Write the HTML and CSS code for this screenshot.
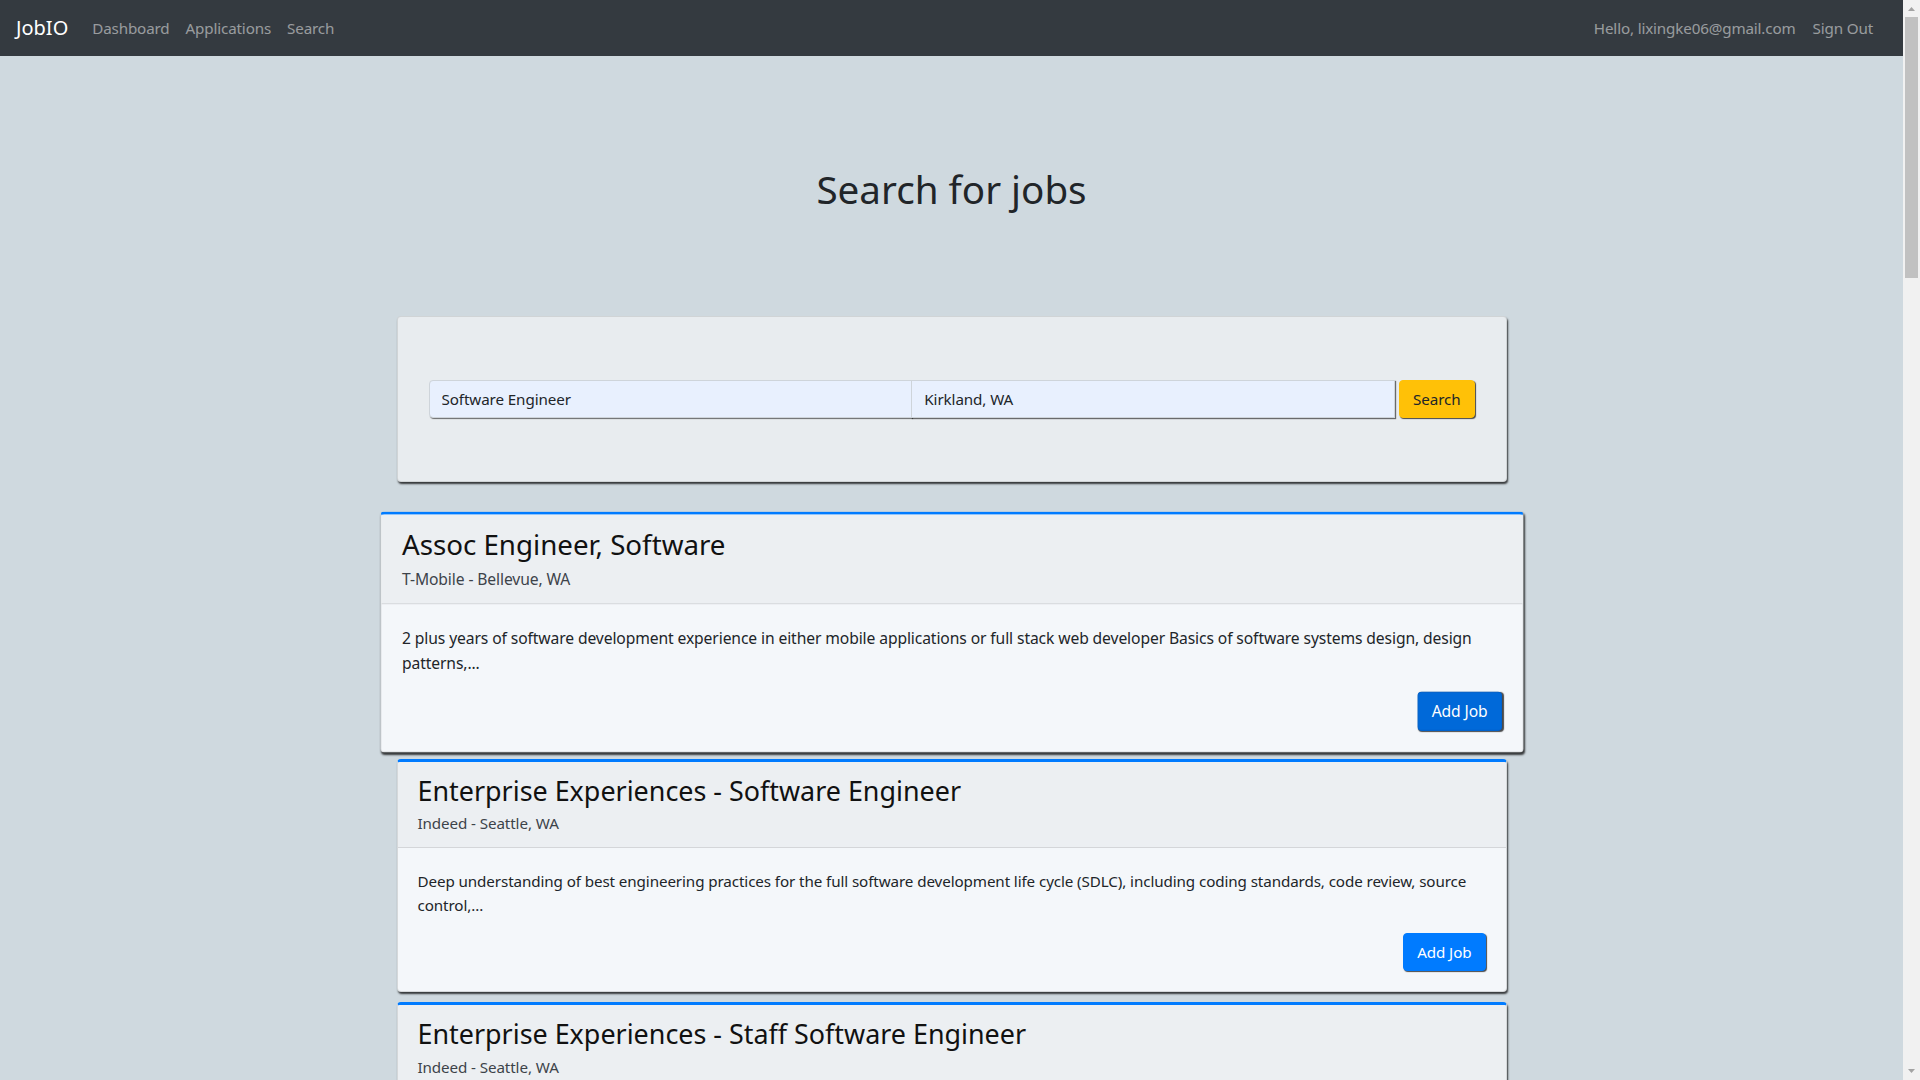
FILE: index.html
```html
<!DOCTYPE html>
<html lang="en">
<head>
<meta charset="utf-8">
<title>JobIO - Search</title>
<link rel="stylesheet" href="styles.css">
</head>
<body>
<div class="page">
  <nav class="navbar">
    <a class="brand" href="#">JobIO</a>
    <ul class="nav">
      <li><a class="nav-link" href="#">Dashboard</a></li>
      <li><a class="nav-link" href="#">Applications</a></li>
      <li><a class="nav-link" href="#">Search</a></li>
    </ul>
    <div class="nav-right">
      <span class="nav-text">Hello, lixingke06@gmail.com</span>
      <a class="nav-link" href="#">Sign Out</a>
    </div>
  </nav>

  <main class="content">
    <h1 class="page-title">Search for jobs</h1>

    <section class="search-card">
      <form class="input-group">
        <input class="field field-first" type="text" value="Software Engineer">
        <input class="field field-last" type="text" value="Kirkland, WA">
        <button class="btn btn-warning" type="button">Search</button>
      </form>
    </section>

    <div class="job-list">
      <article class="job-card is-hovered">
        <header class="job-header">
          <h3 class="job-title">Assoc Engineer, Software</h3>
          <div class="job-sub">T-Mobile - Bellevue, WA</div>
        </header>
        <div class="job-body">
          <p class="job-desc">2 plus years of software development experience in either mobile applications or full stack web developer Basics of software systems design, design patterns,...</p>
          <div class="job-actions"><button class="btn btn-primary btn-hover" type="button">Add Job</button></div>
        </div>
      </article>

      <article class="job-card">
        <header class="job-header">
          <h3 class="job-title">Enterprise Experiences - Software Engineer</h3>
          <div class="job-sub">Indeed - Seattle, WA</div>
        </header>
        <div class="job-body">
          <p class="job-desc">Deep understanding of best engineering practices for the full software development life cycle (SDLC), including coding standards, code review, source control,...</p>
          <div class="job-actions"><button class="btn btn-primary" type="button">Add Job</button></div>
        </div>
      </article>

      <article class="job-card">
        <header class="job-header">
          <h3 class="job-title">Enterprise Experiences - Staff Software Engineer</h3>
          <div class="job-sub">Indeed - Seattle, WA</div>
        </header>
        <div class="job-body">
          <div class="job-actions"><button class="btn btn-primary" type="button">Add Job</button></div>
        </div>
      </article>
    </div>
  </main>
</div>

<aside class="scrollbar" aria-hidden="true">
  <svg class="sb-arrow" width="17" height="17" viewBox="0 0 17 17"><polygon points="5,11 12,11 8.5,7" fill="#a3a3a3"/></svg>
  <div class="sb-thumb"></div>
  <div class="sb-track"></div>
  <svg class="sb-arrow" width="17" height="17" viewBox="0 0 17 17"><polygon points="5,6 12,6 8.5,10" fill="#a3a3a3"/></svg>
</aside>
</body>
</html>
```

FILE: styles.css
```css
* { box-sizing: border-box; }

html, body {
  margin: 0;
  height: 100%;
  overflow: hidden;
}

body {
  display: flex;
  background: #cfd9df;
  font-family: "Noto Sans", "Open Sans", sans-serif;
  font-size: 15.2px;
  letter-spacing: -0.1px;
  line-height: 24px;
  color: #212529;
}

.page {
  flex: 1;
  min-width: 0;
  height: 100vh;
  overflow: hidden;
}

/* Navbar */
.navbar {
  height: 56px;
  background: #343a40;
  display: flex;
  align-items: center;
  padding: 0 22px 0 16px;
}

.brand {
  color: #fff;
  font-size: 20px;
  letter-spacing: 0;
  text-decoration: none;
  margin-right: 16px;
  line-height: 30px;
}

.nav {
  display: flex;
  list-style: none;
  margin: 0;
  padding: 0;
}

.nav-link {
  display: block;
  padding: 8px;
  color: rgba(255, 255, 255, 0.5);
  text-decoration: none;
  letter-spacing: -0.15px;
}

.nav-right {
  margin-left: auto;
  display: flex;
  align-items: center;
  gap: 9px;
}

.nav-text {
  color: rgba(255, 255, 255, 0.5);
  letter-spacing: -0.15px;
}

/* Content */
.content {
  width: 1110px;
  margin: 0 auto;
}

.page-title {
  margin: 109px 0 103px;
  font-size: 38.6px;
  font-weight: 400;
  letter-spacing: 0;
  line-height: 48px;
  text-align: center;
  color: #212529;
}

.search-card {
  background: #e8ecef;
  border: 1px solid rgba(0, 0, 0, 0.1);
  border-radius: 4px;
  padding: 63px 31px;
  box-shadow: 1px 2px 2px rgba(0, 0, 0, 0.75);
}

.input-group {
  display: flex;
  margin: 0;
}

.field {
  flex: 1;
  min-width: 0;
  height: 38px;
  padding: 6px 12px;
  font-family: inherit;
  font-size: 15.2px;
  letter-spacing: -0.1px;
  color: #212529;
  background: #e8f0fe;
  border: 1px solid #ced4da;
  box-shadow: 1px 1px 1px rgba(0, 0, 0, 0.55);
  outline: none;
}

.field-first {
  border-radius: 4px 0 0 4px;
}

.field-last {
  border-radius: 0;
  margin-left: -1px;
}

.btn {
  height: 38px;
  padding: 6px 13px;
  font-family: inherit;
  font-size: 15.2px;
  letter-spacing: -0.1px;
  line-height: 24px;
  border: 1px solid transparent;
  border-radius: 4px;
  box-shadow: 1px 1px 1px rgba(0, 0, 0, 0.7);
  cursor: pointer;
}

.btn-warning {
  margin-left: 4px;
  background: #ffc107;
  border-color: #ffc107;
  color: #212529;
}

.btn-primary {
  background: #007bff;
  border-color: #007bff;
  color: #fff;
}

.btn-hover {
  background: #0069d9;
  border-color: #0062cc;
}

/* Job cards */
.job-list {
  margin-top: 33px;
  display: flex;
  flex-direction: column;
  gap: 10px;
}

.job-card {
  background: #f4f7fa;
  border: 1px solid rgba(0, 0, 0, 0.125);
  border-top: 3px solid #007bff;
  border-radius: 4px;
  box-shadow: 1px 2px 2px rgba(0, 0, 0, 0.75);
  overflow: hidden;
}

.job-card.is-hovered {
  transform: scale(1.03);
}

.job-header {
  background: #eceff2;
  border-bottom: 1px solid rgba(0, 0, 0, 0.1);
  padding: 12px 20px 12px;
}

.job-title {
  margin: 0 0 4px;
  font-size: 26.9px;
  font-weight: 400;
  letter-spacing: 0;
  line-height: 33.6px;
  color: #111;
}

.job-sub {
  color: #3d434a;
}

.job-body {
  padding: 21px 20px 20px;
}

.job-desc {
  margin: 0 0 16px;
}

.job-actions {
  display: flex;
  justify-content: flex-end;
}

/* Fake scrollbar */
.scrollbar {
  width: 17px;
  height: 100vh;
  flex: none;
  background: #f1f1f1;
  display: flex;
  flex-direction: column;
}

.sb-arrow {
  display: block;
  flex: none;
}

.sb-thumb {
  height: 261px;
  margin: 0 2px;
  background: #c1c1c1;
  flex: none;
}

.sb-track {
  flex: 1;
}
```
